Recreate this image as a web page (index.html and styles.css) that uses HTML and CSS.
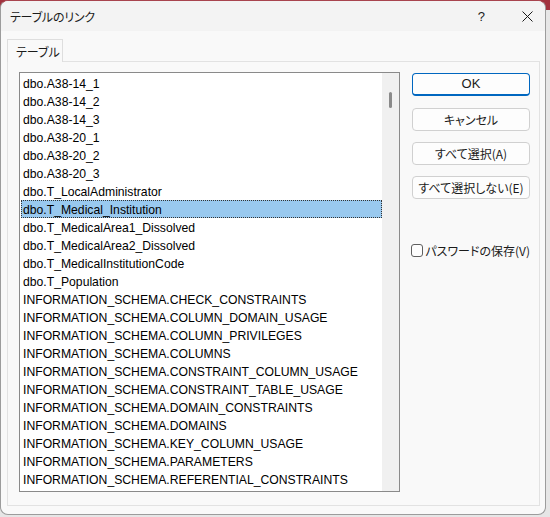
FILE: index.html
```html
<!DOCTYPE html>
<html lang="ja">
<head>
<meta charset="utf-8">
<title>テーブルのリンク</title>
<link rel="stylesheet" href="styles.css">
</head>
<body>
<div class="window">
  <div class="titlebar">
    <span class="title">テーブルのリンク</span>
    <span class="help">?</span>
    <svg class="close" width="11" height="11" viewBox="0 0 11 11"><path d="M0.5 0.5L10.5 10.5M10.5 0.5L0.5 10.5" stroke="#1a1a1a" stroke-width="1" fill="none"/></svg>
  </div>
  <div class="content">
    <div class="tabs"><div class="tab">テーブル</div></div>
    <div class="panel">
      <div class="listbox">
        <ul class="items">
          <li>dbo.A38-14_1</li>
          <li>dbo.A38-14_2</li>
          <li>dbo.A38-14_3</li>
          <li>dbo.A38-20_1</li>
          <li>dbo.A38-20_2</li>
          <li>dbo.A38-20_3</li>
          <li>dbo.T_LocalAdministrator</li>
          <li class="selected">dbo.T_Medical_Institution</li>
          <li>dbo.T_MedicalArea1_Dissolved</li>
          <li>dbo.T_MedicalArea2_Dissolved</li>
          <li>dbo.T_MedicalInstitutionCode</li>
          <li>dbo.T_Population</li>
          <li>INFORMATION_SCHEMA.CHECK_CONSTRAINTS</li>
          <li>INFORMATION_SCHEMA.COLUMN_DOMAIN_USAGE</li>
          <li>INFORMATION_SCHEMA.COLUMN_PRIVILEGES</li>
          <li>INFORMATION_SCHEMA.COLUMNS</li>
          <li>INFORMATION_SCHEMA.CONSTRAINT_COLUMN_USAGE</li>
          <li>INFORMATION_SCHEMA.CONSTRAINT_TABLE_USAGE</li>
          <li>INFORMATION_SCHEMA.DOMAIN_CONSTRAINTS</li>
          <li>INFORMATION_SCHEMA.DOMAINS</li>
          <li>INFORMATION_SCHEMA.KEY_COLUMN_USAGE</li>
          <li>INFORMATION_SCHEMA.PARAMETERS</li>
          <li>INFORMATION_SCHEMA.REFERENTIAL_CONSTRAINTS</li>
        </ul>
        <div class="scrollbar"><div class="thumb"></div></div>
      </div>
      <div class="side">
        <button class="btn primary">OK</button>
        <button class="btn">キャンセル</button>
        <button class="btn">すべて選択(A)</button>
        <button class="btn">すべて選択しない(E)</button>
        <label class="check"><span class="box"></span><span class="check-label">パスワードの保存(V)</span></label>
      </div>
    </div>
  </div>
</div>
</body>
</html>
```

FILE: styles.css
```css
html {
  background: linear-gradient(to bottom, #a2323e 0, #a2323e 10px, #e6e6e6 10px);
  height: 100%;
}
body {
  margin: 0;
  width: 550px;
  height: 517px;
  overflow: hidden;
}
.window {
  box-sizing: border-box;
  width: 546px;
  height: 515px;
  border: 1px solid #9c9c9c;
  border-top-color: #a8444e;
  border-radius: 8px;
  background: #f9f9f9;
  overflow: hidden;
  font-family: "Noto Sans CJK JP", "Liberation Sans", sans-serif;
  font-feature-settings: "palt";
  color: #1b1b1b;
}
.titlebar {
  height: 30px;
  background: #f3f3f3;
  display: flex;
  align-items: center;
  font-size: 12px;
}
.title {
  margin-left: 9px;
  flex: 1;
  letter-spacing: -0.2px;
}
.help {
  font-family: "Liberation Sans", sans-serif;
  font-size: 13px;
  margin-right: 37px;
}
.close {
  margin-right: 12px;
}
.content {
  padding: 8px 0 0 6px;
}
.tabs {
  display: flex;
}
.tab {
  box-sizing: border-box;
  width: 56px;
  height: 23px;
  border: 1px solid #dedede;
  border-bottom: none;
  background: #f9f9f9;
  font-size: 12px;
  padding: 3px 0 0 8px;
  margin-bottom: -1px;
  position: relative;
  z-index: 1;
}
.panel {
  box-sizing: border-box;
  width: 533px;
  height: 445px;
  border: 1px solid #e2e2e2;
  padding: 10px 0 0 11px;
  display: flex;
}
.listbox {
  box-sizing: border-box;
  width: 381px;
  height: 420px;
  border: 1px solid #8a8a8a;
  background: #ffffff;
  display: flex;
  overflow: hidden;
}
.items {
  list-style: none;
  margin: 0;
  padding: 1px 0 0 1px;
  flex: 1;
  overflow: hidden;
  font-family: "Liberation Sans", sans-serif;
  font-size: 12.2px;
  color: #000;
}
.items li {
  box-sizing: border-box;
  height: 18px;
  line-height: 16px;
  padding: 2px 0 0 2px;
  white-space: nowrap;
}
.items li.selected {
  background: #99c9ef;
  outline: 1px dotted #333;
  outline-offset: -1px;
}
.scrollbar {
  width: 17px;
  background: #f0f0f0;
}
.thumb {
  width: 3px;
  height: 16px;
  background: #8a8a8a;
  border-radius: 1.5px;
  margin: 19px 0 0 7px;
}
.side {
  margin-left: 12px;
  padding-top: 1px;
  display: flex;
  flex-direction: column;
  width: 118px;
}
.btn {
  box-sizing: border-box;
  width: 118px;
  height: 23px;
  margin-bottom: 11px;
  border: 1px solid #d0d0d0;
  border-radius: 4px;
  background: #fdfdfd;
  font-family: "Noto Sans CJK JP", "Liberation Sans", sans-serif;
  font-feature-settings: "palt";
  font-size: 12px;
  color: #1b1b1b;
  padding: 0;
  line-height: 20px;
}
.btn.primary {
  border-color: #0067c0;
  border-bottom-width: 2px;
  margin-bottom: 12px;
  font-family: "Liberation Sans", sans-serif;
  font-size: 13px;
}
.check {
  display: flex;
  align-items: center;
  margin-top: 32px;
  margin-left: -1px;
  font-size: 12px;
  white-space: nowrap;
}
.box {
  box-sizing: border-box;
  width: 13px;
  height: 13px;
  border: 1px solid #5f5f5f;
  border-radius: 3px;
  background: #fdfdfd;
  margin-right: 2px;
}
```
